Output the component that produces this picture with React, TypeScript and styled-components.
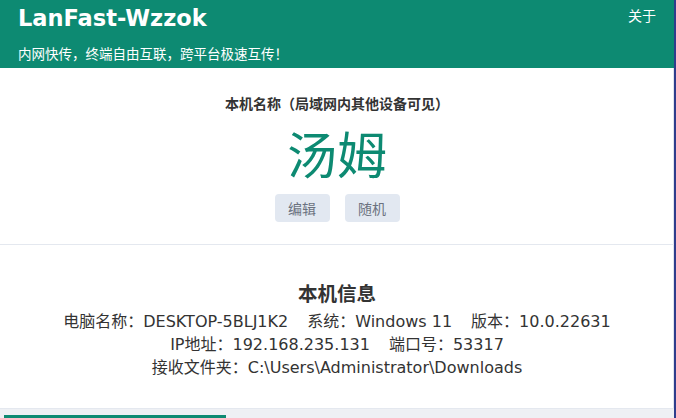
import { createGlobalStyle } from 'styled-components';
import styled from 'styled-components';

const GlobalStyle = createGlobalStyle`
  html, body {
    margin: 0;
    padding: 0;
    background: #ffffff;
  }
  body {
    font-family: 'Noto Sans CJK SC', 'Noto Sans', sans-serif;
    color: #333333;
    overflow: hidden;
  }
`;

const Shell = styled.div`
  width: 674px;
  height: 418px;
  display: flex;
  flex-direction: column;
  border-right: 2px solid #2f3d8c;
  box-shadow: inset -1px 0 0 #dfe4ee;
`;

// 顶部标题栏
const Header = styled.header`
  height: 68px;
  background: #0d8a72;
  color: #ffffff;
  padding: 0 18px;
  box-sizing: border-box;
  display: flex;
  justify-content: space-between;
  align-items: flex-start;
`;

const Brand = styled.div`
  display: flex;
  flex-direction: column;
`;

const Title = styled.h1`
  margin: 2px 0 0;
  font-family: 'DejaVu Sans', 'Noto Sans CJK SC', sans-serif;
  font-size: 22.5px;
  line-height: 32px;
  font-weight: 700;
`;

const Slogan = styled.div`
  margin-top: 10px;
  font-size: 13.5px;
  line-height: 18px;
`;

const AboutLink = styled.a`
  margin-top: 5px;
  font-size: 14px;
  line-height: 20px;
  color: #ffffff;
  cursor: pointer;
`;

const Section = styled.section<{ $h: number; $divider?: boolean }>`
  height: ${(p) => p.$h}px;
  box-sizing: border-box;
  display: flex;
  flex-direction: column;
  align-items: center;
  border-bottom: ${(p) => (p.$divider ? '1px solid #e4e8ef' : 'none')};
`;

const Label = styled.div`
  margin-top: 25px;
  font-size: 14px;
  line-height: 20px;
  font-weight: 700;
  color: #333333;
`;

const DeviceName = styled.div`
  margin-top: 7px;
  font-size: 50px;
  line-height: 64px;
  color: #0d8a72;
`;

const Actions = styled.div`
  margin-top: 10px;
  display: flex;
  gap: 15px;
`;

const Button = styled.button`
  width: 55px;
  height: 28px;
  border: none;
  border-radius: 4px;
  background: #e2e8f1;
  color: #6b7280;
  font-family: inherit;
  font-size: 14px;
  cursor: pointer;
`;

const InfoTitle = styled.h2`
  margin: 35px 0 4px;
  font-size: 19.5px;
  line-height: 26px;
  font-weight: 700;
  color: #333333;
`;

const InfoLine = styled.div`
  display: flex;
  gap: 19px;
  font-family: 'DejaVu Sans', 'Noto Sans CJK SC', sans-serif;
  font-size: 16px;
  line-height: 23px;
  color: #333333;
`;

const Footer = styled.div`
  flex: 1;
  background: #eef0f4;
  border-top: 1px solid #e4e8ef;
  padding: 6px 0 0 4px;
  display: flex;
  align-items: flex-end;
`;

const Progress = styled.div`
  height: 3px;
  background: #0d8a72;
`;

const info = [
  ['电脑名称：DESKTOP-5BLJ1K2', '系统：Windows 11', '版本：10.0.22631'],
  ['IP地址：192.168.235.131', '端口号：53317'],
  ['接收文件夹：C:\\Users\\Administrator\\Downloads'],
];

export default function App() {
  return (
    <>
      <GlobalStyle />
      <Shell>
        <Header>
          <Brand>
            <Title>LanFast-Wzzok</Title>
            <Slogan>内网快传，终端自由互联，跨平台极速互传！</Slogan>
          </Brand>
          <AboutLink>关于</AboutLink>
        </Header>
        <Section $h={177} $divider>
          <Label>本机名称（局域网内其他设备可见）</Label>
          <DeviceName>汤姆</DeviceName>
          <Actions>
            <Button>编辑</Button>
            <Button>随机</Button>
          </Actions>
        </Section>
        <Section $h={163}>
          <InfoTitle>本机信息</InfoTitle>
          {info.map((line, i) => (
            <InfoLine key={i}>
              {line.map((t) => (
                <span key={t}>{t}</span>
              ))}
            </InfoLine>
          ))}
        </Section>
        <Footer>
          <Progress style={{ width: '222px' }} />
        </Footer>
      </Shell>
    </>
  );
}
